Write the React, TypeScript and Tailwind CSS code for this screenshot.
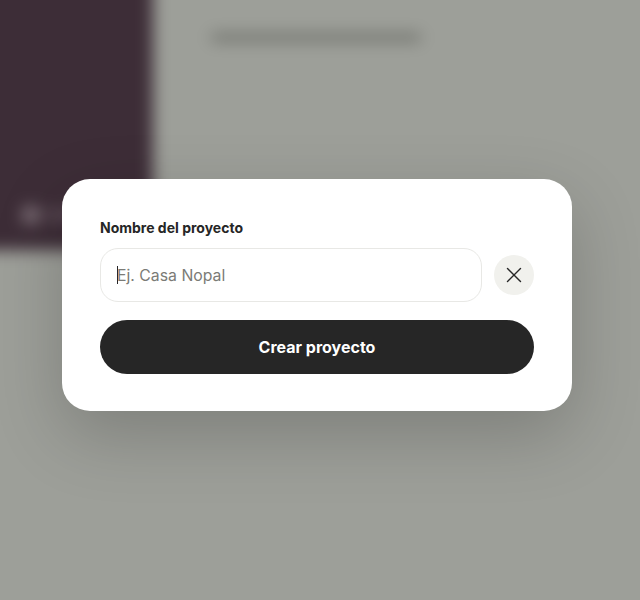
import { X } from 'lucide-react';

/** The page behind the dialog; it overhangs the window by 24px so the blur has no pale rim. */
function BackgroundPage() {
  return (
    <div className="-m-[24px] flex h-[648px] w-[688px] items-start bg-[#9d9f99] blur-[8px]">
      <aside className="flex h-[274px] w-[177px] shrink-0 flex-col justify-end bg-[#3d2d37] pb-[26px] pl-[46px]">
        <div className="flex items-center gap-[6px]">
          <span className="h-[18px] w-[18px] rounded-full bg-[#85777f]" />
          <span className="h-[10px] w-[40px] rounded bg-[#5e4e58]" />
        </div>
      </aside>
      <main className="flex-1 pl-[58px] pt-[58px]">
        <div className="h-[7px] w-[210px] rounded bg-[#686a64]" />
      </main>
    </div>
  );
}

export default function App() {
  return (
    <div className="relative h-[600px] w-[640px] overflow-hidden font-['Inter',sans-serif]">
      <BackgroundPage />
      <div className="absolute inset-0 pl-[62px] pt-[179px]">
        <form
          className="flex h-[232px] w-[510px] flex-col rounded-[28px] bg-white px-[38px] pt-[40px] shadow-[0_24px_70px_rgba(0,0,0,0.2)]"
          onSubmit={(e) => e.preventDefault()}
        >
          <label htmlFor="project-name" className="text-[14px] font-bold leading-[18px] text-[#262626]">
            Nombre del proyecto
          </label>
          <div className="mt-[11px] flex items-center gap-[12px]">
            <div className="flex h-[54px] w-[382px] items-center rounded-[18px] border border-[#e8e8e5] pl-[16px]">
              <span className="-mr-px h-[18px] w-px bg-[#262626]" />
              <input
                id="project-name"
                className="w-full bg-transparent pt-px text-[15.8px] leading-[20px] text-[#262626] outline-none placeholder:text-[#7b7b76]"
                placeholder="Ej. Casa Nopal"
              />
            </div>
            <button type="button" className="flex h-[40px] w-[40px] items-center justify-center rounded-full bg-[#f1f1ed] text-[#262626]">
              <X size={26} strokeWidth={1.3} />
            </button>
          </div>
          <button type="submit" className="mt-[18px] h-[54px] w-[434px] rounded-full bg-[#262626] text-[16px] font-bold text-white">
            Crear proyecto
          </button>
        </form>
      </div>
    </div>
  );
}
